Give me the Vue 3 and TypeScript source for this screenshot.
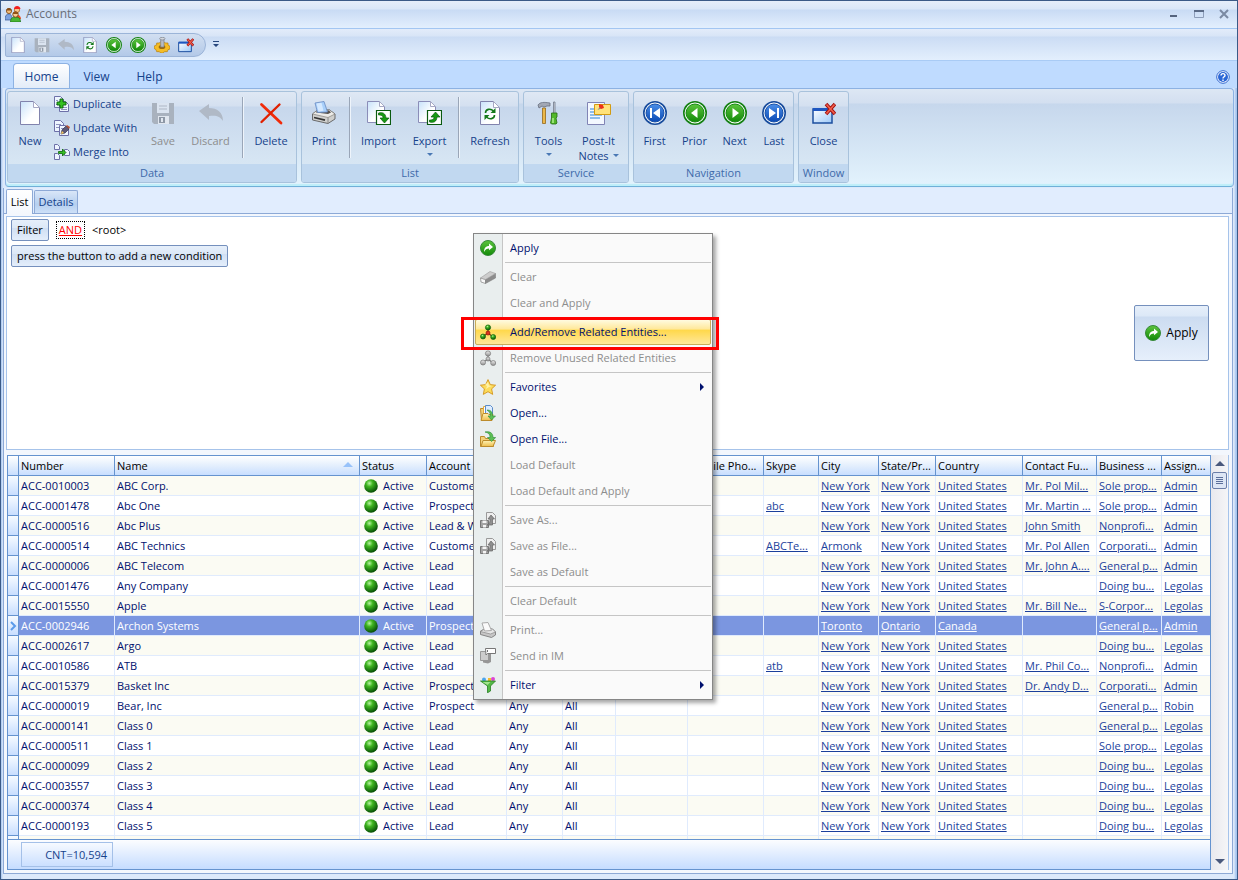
<script setup lang="ts">
import { ref } from 'vue'

interface RibbonButton { label: string; icon: string; width: number; disabled?: boolean; drop?: boolean; second?: string }
interface Stack { stack: { label: string; icon: string }[] }
interface Separator { sep: true }
type RibbonItem = RibbonButton | Stack | Separator
interface MenuEntry { label: string; icon?: string; disabled?: boolean; sub?: boolean; active?: boolean; line?: boolean }

const quick = [
  { name: 'New', icon: 'doc', off: false },
  { name: 'Save', icon: 'floppy', off: true },
  { name: 'Discard', icon: 'undo', off: true },
  { name: 'Refresh', icon: 'refresh', off: false },
  { name: 'Prior', icon: 'prior', off: false },
  { name: 'Next', icon: 'next', off: false },
  { name: 'Settings', icon: 'gear', off: false },
  { name: 'Close', icon: 'close', off: false }
]

const groups: { title: string; items: RibbonItem[] }[] = [
  { title: 'Data', items: [
    { label: 'New', icon: 'doc', width: 44 },
    { stack: [{ label: 'Duplicate', icon: 'duplicate' }, { label: 'Update With', icon: 'update' }, { label: 'Merge Into', icon: 'merge' }] },
    { label: 'Save', icon: 'floppy', width: 38, disabled: true },
    { label: 'Discard', icon: 'undo', width: 57, disabled: true },
    { sep: true },
    { label: 'Delete', icon: 'delete', width: 50 }
  ] },
  { title: 'List', items: [
    { label: 'Print', icon: 'printer', width: 44 },
    { sep: true },
    { label: 'Import', icon: 'import', width: 51 },
    { label: 'Export', icon: 'export', width: 51, drop: true },
    { sep: true },
    { label: 'Refresh', icon: 'refresh', width: 56 }
  ] },
  { title: 'Service', items: [
    { label: 'Tools', icon: 'tools', width: 49, drop: true },
    { label: 'Post-It', icon: 'note', width: 51, second: 'Notes' }
  ] },
  { title: 'Navigation', items: [
    { label: 'First', icon: 'first', width: 41 },
    { label: 'Prior', icon: 'prior', width: 39 },
    { label: 'Next', icon: 'next', width: 41 },
    { label: 'Last', icon: 'last', width: 38 }
  ] },
  { title: 'Window', items: [{ label: 'Close', icon: 'close', width: 49 }] }
]

const menu: MenuEntry[] = [
  { label: 'Apply', icon: 'apply' },
  { label: 'Clear', icon: 'eraser', disabled: true, line: true },
  { label: 'Clear and Apply', disabled: true },
  { label: 'Add/Remove Related Entities...', icon: 'nodes', active: true, line: true },
  { label: 'Remove Unused Related Entities', icon: 'nodes-off', disabled: true },
  { label: 'Favorites', icon: 'star', sub: true, line: true },
  { label: 'Open...', icon: 'open' },
  { label: 'Open File...', icon: 'openfile' },
  { label: 'Load Default', disabled: true },
  { label: 'Load Default and Apply', disabled: true },
  { label: 'Save As...', icon: 'saveas', disabled: true, line: true },
  { label: 'Save as File...', icon: 'saveas', disabled: true },
  { label: 'Save as Default', disabled: true },
  { label: 'Clear Default', disabled: true, line: true },
  { label: 'Print...', icon: 'printer-off', disabled: true, line: true },
  { label: 'Send in IM', icon: 'im', disabled: true },
  { label: 'Filter', icon: 'funnel', sub: true, line: true }
]

const columns = [
  { title: 'Number', width: 96 }, { title: 'Name', width: 0 }, { title: 'Status', width: 67 },
  { title: 'Account', width: 80 }, { title: '', width: 56 }, { title: '', width: 53 }, { title: '', width: 72 },
  { title: 'Mobile Pho...', width: 76 }, { title: 'Skype', width: 55 }, { title: 'City', width: 60 },
  { title: 'State/Pr...', width: 57 }, { title: 'Country', width: 87 }, { title: 'Contact Fu...', width: 74 },
  { title: 'Business ...', width: 65 }, { title: 'Assign...', width: 48 }
]

interface Account { num: string; name: string; type: string; links: string[]; scope: string[] }
const NY = ['New York', 'New York', 'United States']
const none = ['', '']
const all = ['Any', 'All']
const source: [string, string, string, string[], string[]][] = [
  ['ACC-0010003', 'ABC Corp.', 'Customer', ['', ...NY, 'Mr. Pol Mil...', 'Sole prop...', 'Admin'], none],
  ['ACC-0001478', 'Abc One', 'Prospect', ['abc', ...NY, 'Mr. Martin ...', 'Sole prop...', 'Admin'], none],
  ['ACC-0000516', 'Abc Plus', 'Lead & W', ['', ...NY, 'John Smith', 'Nonprofi...', 'Admin'], none],
  ['ACC-0000514', 'ABC Technics', 'Customer', ['ABCTe...', 'Armonk', 'New York', 'United States', 'Mr. Pol Allen', 'Corporati...', 'Admin'], none],
  ['ACC-0000006', 'ABC Telecom', 'Lead', ['', ...NY, 'Mr. John A....', 'General p...', 'Admin'], none],
  ['ACC-0001476', 'Any Company', 'Lead', ['', ...NY, '', 'Doing bu...', 'Legolas'], none],
  ['ACC-0015550', 'Apple', 'Lead', ['', ...NY, 'Mr. Bill Ne...', 'S-Corpor...', 'Legolas'], none],
  ['ACC-0002946', 'Archon Systems', 'Prospect', ['', 'Toronto', 'Ontario', 'Canada', '', 'General p...', 'Admin'], none],
  ['ACC-0002617', 'Argo', 'Lead', ['', ...NY, '', 'Doing bu...', 'Legolas'], none],
  ['ACC-0010586', 'ATB', 'Lead', ['atb', ...NY, 'Mr. Phil Co...', 'Nonprofi...', 'Admin'], none],
  ['ACC-0015379', 'Basket Inc', 'Prospect', ['', ...NY, 'Dr. Andy D...', 'Corporati...', 'Admin'], none],
  ['ACC-0000019', 'Bear, Inc', 'Prospect', ['', ...NY, '', 'General p...', 'Robin'], all],
  ['ACC-0000141', 'Class 0', 'Lead', ['', ...NY, '', 'General p...', 'Legolas'], all],
  ['ACC-0000511', 'Class 1', 'Lead', ['', ...NY, '', 'Sole prop...', 'Legolas'], all],
  ['ACC-0000099', 'Class 2', 'Lead', ['', ...NY, '', 'Doing bu...', 'Legolas'], all],
  ['ACC-0003557', 'Class 3', 'Lead', ['', ...NY, '', 'Doing bu...', 'Legolas'], all],
  ['ACC-0000374', 'Class 4', 'Lead', ['', ...NY, '', 'Doing bu...', 'Legolas'], all],
  ['ACC-0000193', 'Class 5', 'Lead', ['', ...NY, '', 'Doing bu...', 'Legolas'], all]
]
const rows: Account[] = source.map(([num, name, type, links, scope]) => ({ num, name, type, links, scope }))

const selected = ref(7)
const ribbonTab = ref('Home')
</script>

<template>
  <div class="window">
    <svg class="defs" aria-hidden="true">
      <defs>
        <linearGradient id="gPaper" x1="0" y1="0" x2="1" y2="1"><stop offset="0" stop-color="#c8e2fb" /><stop offset=".6" stop-color="#fff" /></linearGradient>
        <radialGradient id="gBall" cx=".38" cy=".3" r=".7"><stop offset="0" stop-color="#b9f5a0" /><stop offset=".35" stop-color="#3fb51f" /><stop offset="1" stop-color="#064f06" /></radialGradient>
        <linearGradient id="gGreen" x1="0" y1="0" x2="0" y2="1"><stop offset="0" stop-color="#5cc43e" /><stop offset="1" stop-color="#128a08" /></linearGradient>
        <linearGradient id="gBlue" x1="0" y1="0" x2="0" y2="1"><stop offset="0" stop-color="#4c8fe8" /><stop offset="1" stop-color="#0a49b4" /></linearGradient>
        <linearGradient id="gWin" x1="0" y1="0" x2="1" y2="1"><stop offset="0" stop-color="#fff" /><stop offset="1" stop-color="#9cc8f8" /></linearGradient>
        <linearGradient id="gFold" x1="0" y1="0" x2="0" y2="1"><stop offset="0" stop-color="#fff3b4" /><stop offset="1" stop-color="#edbd4c" /></linearGradient>
        <linearGradient id="gGrey" x1="0" y1="0" x2="0" y2="1"><stop offset="0" stop-color="#f0f0f0" /><stop offset="1" stop-color="#8f8f8f" /></linearGradient>
      </defs>
      <symbol id="doc" viewBox="0 0 24 24"><path d="M2.500 .5h13l6 6v17h-19z" fill="url(#gPaper)" stroke="#8183ad" /><path d="M15.500 .5v6h6z" fill="#fff" stroke="#a6a8c4" /></symbol>
      <symbol id="floppy" viewBox="0 0 24 24"><path d="M1 2h22v21H3l-2-2z" fill="#a9b2be" /><path d="M6 2h12v10H6z" fill="#dbe4f0" /><path d="M8 5h8M8 8h8" stroke="#aeb7c5" /><path d="M7 15h11v8H7z" fill="#e1e7ef" /><path d="M8 16h6v6H8z" fill="#8e98a6" /><path d="M10 17h2v4h-2z" fill="#e1e7ef" /></symbol>
      <symbol id="undo" viewBox="0 0 24 24"><path d="M0 10 10 3v4c8 0 14 4 14 13-3-5-7-6-14-5v4z" fill="#b0b9c6" /></symbol>
      <symbol id="refresh" viewBox="0 0 24 24"><use href="#doc" /><path d="M7.500 12c0-4 5-5 8-2M16.500 14c0 4-5 5-8 2" fill="none" stroke="#14791b" stroke-width="1.600" /><path d="M17.500 7v5h-5zM6.500 19v-5h5z" fill="#14791b" /></symbol>
      <symbol id="ringg" viewBox="0 0 24 24"><circle cx="12" cy="12" r="11.200" fill="#fff" stroke="#138012" stroke-width="1.600" /><circle cx="12" cy="12" r="9" fill="url(#gGreen)" stroke="#148a12" /></symbol>
      <symbol id="ringb" viewBox="0 0 24 24"><circle cx="12" cy="12" r="11.200" fill="#fff" stroke="#174b9c" stroke-width="1.600" /><circle cx="12" cy="12" r="9" fill="url(#gBlue)" stroke="#164fa8" /></symbol>
      <symbol id="prior" viewBox="0 0 24 24"><use href="#ringg" /><path d="M14.500 7v10L8 12z" fill="#fff" /></symbol>
      <symbol id="next" viewBox="0 0 24 24"><use href="#ringg" /><path d="M9.500 7v10l6.500-5z" fill="#fff" /></symbol>
      <symbol id="first" viewBox="0 0 24 24"><use href="#ringb" /><path d="M17 7v10l-7-5zM7 7h2v10H7z" fill="#fff" /></symbol>
      <symbol id="last" viewBox="0 0 24 24"><use href="#ringb" /><path d="M7 7v10l7-5zM15 7h2v10h-2z" fill="#fff" /></symbol>
      <symbol id="gear" viewBox="0 0 24 24"><path d="M1 13l3-1 0-3 4 0 2-2h5l2 2 4 0 0 3 3 2v4l-3 1-1 3-4 0-3 2h-3l-2-2-4 0-1-3-3-2z" fill="#f5bd25" stroke="#b27a0c" /><ellipse cx="12" cy="15" rx="5" ry="3" fill="#9a6a10" /><path d="M10 3h5v12h-5z" fill="#b8bcc4" stroke="#767b86" /><ellipse cx="12.500" cy="2.500" rx="4" ry="2" fill="#d5d8de" stroke="#767b86" /></symbol>
      <symbol id="close" viewBox="0 0 24 24"><path d="M1 8h19v14H1z" fill="url(#gWin)" stroke="#1c4f9f" stroke-width="1.500" /><path d="M1 7h19v3H1z" fill="#1e56c0" /><path d="M14 3l9 10M23 3l-9 10" stroke="#a31212" stroke-width="3.600" /><path d="M14.500 3.500l8 9M22.500 3.500l-8 9" stroke="#f2604c" stroke-width="1.600" /></symbol>
      <symbol id="delete" viewBox="0 0 24 24"><path d="M2.500 3.500 22 22" stroke="#f02b0a" stroke-width="2.800" stroke-linecap="round" /><path d="M20.500 3.500 2.500 21" stroke="#e02000" stroke-width="2.400" stroke-linecap="round" /></symbol>
      <symbol id="printer" viewBox="0 0 24 24"><path d="M.5 13l5-4h12l5.500 4v5l-7 4.500-15.500-3.500z" fill="#cfcfcd" stroke="#5d5d5d" stroke-width=".9" /><path d="M.5 13l5-4h12l5.500 4-7 3.500z" fill="#ecebe8" stroke="#77746f" stroke-width=".6" /><path d="M5 9.500h12l2 2-3 1.500-12-1.500z" fill="#55514d" /><path d="M3 2l9-1.500 3.500 10.500-10 .5z" fill="#a9d0fb" stroke="#6789c2" stroke-width=".8" /><path d="M4.500 2.500l5-.8 2 8-5 .8z" fill="#d5e9ff" /><path d="M2 16.500l11 2.700" stroke="#333" stroke-width="1.800" /><path d="M16 16.500v6" stroke="#8a8a8a" /></symbol>
      <symbol id="import" viewBox="0 0 24 24"><path d="M.5 .5h12l5 5v16h-17z" fill="url(#gPaper)" stroke="#8b8db8" /><path d="M12.500 .5v5h5z" fill="#fff" stroke="#a6a8c4" /><path d="M9.500 9.500h14v14h-14z" fill="#fff" stroke="#0a5a10" stroke-width="1.200" /><path d="M11.500 12c4-1 7 0 7.500 5h3l-4.500 5-4.500-5h3c0-2-1-3-4.500-3z" fill="#179a12" stroke="#0a5a10" stroke-width=".7" /></symbol>
      <symbol id="export" viewBox="0 0 24 24"><path d="M.5 .5h12l5 5v16h-17z" fill="url(#gPaper)" stroke="#8b8db8" /><path d="M12.500 .5v5h5z" fill="#fff" stroke="#a6a8c4" /><path d="M9.500 9.500h14v14h-14z" fill="#fff" stroke="#0a5a10" stroke-width="1.200" /><path d="M11.500 21c4 1 7 0 7.500-5h3L17.500 11l-4.500 5h3c0 2-1 3-4.500 3z" fill="#179a12" stroke="#0a5a10" stroke-width=".7" /></symbol>
      <symbol id="tools" viewBox="0 0 24 24"><path d="M1 4c2-3 6-3 12-2v3h-3L7 6 5 5 2 7z" fill="#a2a8b5" stroke="#666d7d" stroke-width=".8" /><path d="M5.500 7h3v15.500h-3z" fill="#ecb849" stroke="#94681a" stroke-width=".8" /><path d="M16.500 1h1.500v12h-1.500z" fill="#d2d6de" stroke="#70788a" stroke-width=".8" /><path d="M14.500 12h5.500v4l-1 1 1 5-1 1h-4.500l-1-1 1-5z" fill="#52b72b" stroke="#236d10" stroke-width=".8" /><path d="M16 17v5" stroke="#b0ef90" stroke-width="1.500" /></symbol>
      <symbol id="note" viewBox="0 0 24 24"><path d="M.5 1.500h17v22H.5z" fill="#f3f8ff" stroke="#8184b5" /><path d="M3 8h12M3 11h12M3 14h12M3 17h10" stroke="#2d83d4" /><path d="M7.500 3.500h16v10h-16z" fill="#ffe27a" stroke="#d29b12" /><path d="M10.500 9l3-4 2 2z" fill="#888" /><path d="M12 3l4 1 1 3-3 1-2-2z" fill="#ee3118" /></symbol>
      <symbol id="duplicate" viewBox="0 0 16 16"><path d="M.5 .5h6l3 3v8h-9z" fill="#eef5ff" stroke="#6d70a8" /><path d="M5.500 5.500h6l3 3v7h-9z" fill="#eef5ff" stroke="#6d70a8" /><path d="M7 11.500h6M7 13.500h6M2 4.500h2M2 8.500h2" stroke="#8f93be" /><path d="M6 3h3v3h3v3H9v3H6V9H3V6h3z" fill="#35c022" stroke="#0a6209" stroke-width=".9" /></symbol>
      <symbol id="update" viewBox="0 0 16 16"><path d="M.5 .5h6l3 3v8h-9z" fill="#eef5ff" stroke="#6d70a8" /><path d="M5.500 5.500h6l3 3v7h-9z" fill="#eef5ff" stroke="#6d70a8" /><path d="M2 4.500h5M2 7.500h3M7 8.500h3" stroke="#8f93be" /><path d="M7 14l1-4 4-4 3 3-4 4z" fill="#5d5a78" stroke="#35324f" stroke-width=".7" /><path d="M12 6l1-1 3 2-1 2z" fill="#b95437" /><path d="M7 14l1-3 2 2z" fill="#ffce5c" /></symbol>
      <symbol id="merge" viewBox="0 0 16 16"><path d="M.5 .5h3l2 2v3h-5zM.5 9.500h3l2 2v4h-5zM10.500 5.500h3l2 2v4h-5z" fill="#eef5ff" stroke="#6d70a8" /><path d="M4.500 7.500h4V5L12 8.500 8.500 12V9.500h-4z" fill="#35c022" stroke="#0a6209" stroke-width=".8" /></symbol>
      <symbol id="users" viewBox="0 0 16 16"><path d="M0 14c0-5 2-6 4-6s3 2 3 6z" fill="#7ba1df" stroke="#375892" stroke-width=".7" /><circle cx="4" cy="5" r="2.600" fill="#f2bd7b" stroke="#7a4311" stroke-width=".8" /><path d="M1.300 4.500c0-3.500 5-3.500 5.400 0z" fill="#8a4d14" /><path d="M9 9c4-1 7 0 7 4h-6z" fill="#eb4b24" /><circle cx="12" cy="4" r="2.600" fill="#f8c58b" stroke="#9a5410" stroke-width=".7" /><path d="M9 3c0-4 6-4 6.500 0z" fill="#f31f1f" /><path d="M5.500 16c0-4 2-5 5-5s5 1 5 5z" fill="#49b634" stroke="#186f12" stroke-width=".7" /><circle cx="10.500" cy="8.500" r="2.700" fill="#f9cb90" stroke="#764010" stroke-width=".9" /><path d="M7.800 8c0-3.500 5.500-3.500 5.500 0z" fill="#925316" /></symbol>
      <symbol id="apply" viewBox="0 0 16 16"><circle cx="8" cy="8" r="7.500" fill="url(#gGreen)" stroke="#37893a" /><path d="M4 12c0-4 2-6 5-6V3.500L13 7 9 10.200V8.500C7 8.500 5 9.500 4 12z" fill="#fff" /></symbol>
      <symbol id="eraser" viewBox="0 0 16 16"><path d="M.5 9l5 1.500v4l-4.500-1.500z" fill="#f7f7f7" stroke="#909090" stroke-width=".8" /><path d="M5.500 10.500l10-6v4.500l-10 5.500z" fill="#8c8c8c" stroke="#808080" stroke-width=".6" /><path d="M.5 9l9.500-6.500 5.500 2-10 6z" fill="#cdcdcd" stroke="#9a9a9a" stroke-width=".6" /></symbol>
      <symbol id="nodes" viewBox="0 0 16 16"><path d="M8 3v6L3 12.500M8 9l5 4" fill="none" stroke="#704510" stroke-width="1.200" /><circle cx="8" cy="3.500" r="2.600" fill="url(#gBall)" stroke="#1b6812" stroke-width=".7" /><circle cx="3" cy="12.500" r="2.500" fill="url(#gBall)" stroke="#1b6812" stroke-width=".7" /><circle cx="13.200" cy="13" r="2.500" fill="url(#gBall)" stroke="#1b6812" stroke-width=".7" /><circle cx="8" cy="9" r="2" fill="#dd321e" stroke="#8e1408" stroke-width=".7" /></symbol>
      <symbol id="nodes-off" viewBox="0 0 16 16"><path d="M8 3v6L3 12.500M8 9l5 4" fill="none" stroke="#777" stroke-width="1.200" /><g fill="url(#gGrey)" stroke="#808080" stroke-width=".8"><circle cx="8" cy="3.500" r="2.600" /><circle cx="3" cy="12.500" r="2.500" /><circle cx="13.200" cy="13" r="2.500" /><circle cx="8" cy="9" r="2" /></g></symbol>
      <symbol id="star" viewBox="0 0 16 16"><path d="M8 .6l2.300 5 5.300.6-4 3.700 1.100 5.500L8 12.700l-4.700 2.700 1.100-5.500-4-3.700 5.300-.6z" fill="#fcdc5c" stroke="#d3951d" stroke-width=".9" stroke-linejoin="round" /><path d="M8 3l1 3.500 3 .5-3 1-3 2 1-3-2-1z" fill="#fff2a7" /></symbol>
      <symbol id="open" viewBox="0 0 16 16"><path d="M.5 3.500h5v12h-4z" fill="#f3d27a" stroke="#bc8b2b" /><path d="M3.500 1.500h7l2 2v9h-9z" fill="#fff" stroke="#e3aa3c" /><path d="M5.500 .5h5l2 2v7h-7z" fill="#dcecff" stroke="#5b8cc8" /><path d="M1 15.500l2-7h5l1 1h4l-1 6z" fill="url(#gFold)" stroke="#bc8b2b" /><path d="M7 5c4 0 5.500 2 5.500 6h3L11.500 15 8 11h2.500c0-3-1-4-3.500-6z" fill="#5cbf55" stroke="#2a8a35" stroke-width=".6" /></symbol>
      <symbol id="openfile" viewBox="0 0 16 16"><path d="M.5 15.500v-10h4l1 2h8v8z" fill="#f3d27a" stroke="#bc8b2b" /><path d="M1 15.500l2-6h12.500l-2.500 6z" fill="url(#gFold)" stroke="#bc8b2b" /><path d="M5 1c5-1 8 1 8 5.500h2.700l-4 4-4.200-4H10c0-3-1-4.500-5-5.500z" fill="#5cbf55" stroke="#2a8a35" stroke-width=".6" /></symbol>
      <symbol id="saveas" viewBox="0 0 16 16"><path d="M6.500 .5h6l3 3v8h-9z" fill="#eee" stroke="#999" /><path d="M.5 8.500h8v7h-8z" fill="#a3a3a3" stroke="#777" /><path d="M2.500 8.500h4v2.500h-4zM3 13h3v2.500H3z" fill="#f4f4f4" /><path d="M11 3l3.500 4h-2v6H7c2-1 3-2 3-6H8z" fill="#8f8f8f" stroke="#666" stroke-width=".7" /></symbol>
      <symbol id="printer-off" viewBox="0 0 16 16"><path d="M.5 9l4-2h8l3 3v3l-4 2.500-11-3z" fill="#c6c6c6" stroke="#858585" /><path d="M.5 9.500l10 2.500 5-2-3-3h-8z" fill="#e6e6e6" stroke="#8a8a8a" stroke-width=".7" /><path d="M2 1l6-.5 3.500 8-7 .5z" fill="#fafafa" stroke="#aaa" /></symbol>
      <symbol id="im" viewBox="0 0 16 16"><path d="M.5 3.500h8v9h-8z" fill="#ccc" stroke="#999" /><path d="M9 5l2 1v8l-3 1.500-5-1V13l5-1z" fill="#969696" /><path d="M5.500 .5h10v5h-8l-1.500 1.500z" fill="#fff" stroke="#777" /><path d="M7.500 2v2" stroke="#777" /></symbol>
      <symbol id="funnel" viewBox="0 0 16 16"><circle cx="4" cy="2.500" r="2" fill="#4ba6ed" /><path d="M8 4V1h3v3z" fill="#f4bc2e" /><circle cx="13" cy="2" r="2" fill="#dc45d2" /><path d="M.5 4h15l-5 5v5l-3 1.800V9z" fill="#54b946" stroke="#267f22" stroke-width=".8" /><path d="M2.500 5h8L7.500 8z" fill="#a3e48e" /></symbol>
      <symbol id="ball" viewBox="0 0 14 14"><circle cx="7" cy="7" r="6.800" fill="url(#gBall)" /></symbol>
    </svg>

    <header class="title">
      <svg class="i16"><use href="#users" /></svg>
      <h1>Accounts</h1>
      <div class="sysbtns">
        <button aria-label="Minimize"><svg viewBox="0 0 10 10"><path d="M1 6h7v2H1z" fill="#56647e" /></svg></button>
        <button aria-label="Maximize"><svg viewBox="0 0 10 10"><path d="M.5 1.500h9v7h-9z" fill="none" stroke="#8d9db9" /><path d="M0 1h10v2H0z" fill="#5a6a86" /></svg></button>
        <button aria-label="Close window"><svg viewBox="0 0 10 10"><path d="M1 1l8 8M9 1 1 9" stroke="#7a89a2" stroke-width="2" /></svg></button>
      </div>
    </header>

    <div class="quick">
      <div class="pill">
        <button v-for="q in quick" :key="q.name" :aria-label="q.name" :disabled="q.off"><svg class="i16"><use :href="'#' + q.icon" /></svg></button>
      </div>
      <button class="more" aria-label="Customize toolbar"><svg viewBox="0 0 8 8"><path d="M1 0h6v1H1zM1 3h6L4 6z" fill="#27477e" /></svg></button>
    </div>

    <nav class="tabs">
      <button v-for="t in ['Home', 'View', 'Help']" :key="t" :class="{ on: t === ribbonTab }" @click="ribbonTab = t">{{ t }}</button>
      <button class="help" aria-label="Help topics"><svg viewBox="0 0 14 14"><circle cx="7" cy="7" r="6.300" fill="#fff" stroke="#2e65cf" /><circle cx="7" cy="7" r="5" fill="#2c67d6" /><path d="M5 5.500c0-2.500 4-2.500 4 0 0 1.300-2 1.300-2 3M7 9.500v1.500" fill="none" stroke="#fff" stroke-width="1.400" /></svg></button>
    </nav>

    <section class="ribbon">
      <div v-for="g in groups" :key="g.title" class="group">
        <div class="tools" :class="{ roomy: g.title === 'Service' }">
          <template v-for="(it, n) in g.items" :key="n">
            <span v-if="'sep' in it" class="vsep"></span>
            <div v-else-if="'stack' in it" class="stack">
              <button v-for="s in it.stack" :key="s.label"><svg class="i16"><use :href="'#' + s.icon" /></svg>{{ s.label }}</button>
            </div>
            <button v-else class="big" :style="{ width: it.width + 'px' }" :disabled="it.disabled">
              <svg class="i24"><use :href="'#' + it.icon" /></svg>
              <span>{{ it.label }}</span>
              <span v-if="it.second" class="second">{{ it.second }}<i class="drop"></i></span>
              <i v-if="it.drop" class="drop below"></i>
            </button>
          </template>
        </div>
        <div class="caption">{{ g.title }}</div>
      </div>
    </section>

    <main class="page">
      <div class="pagetabs">
        <button class="on">List</button><button>Details</button>
      </div>

      <section class="filter">
        <div class="conditions">
          <div class="root">
            <button class="soft">Filter</button>
            <a href="#" class="and">AND</a>
            <span>&lt;root&gt;</span>
          </div>
          <button class="soft">press the button to add a new condition</button>
        </div>
        <button class="applybtn"><svg class="i16"><use href="#apply" /></svg>Apply</button>
      </section>

      <section class="grid">
        <div class="gridmain">
          <div class="scroller">
            <table>
              <colgroup>
                <col class="selcol">
                <col v-for="(c, n) in columns" :key="n" :style="{ width: c.width ? c.width + 'px' : 'auto' }">
              </colgroup>
              <thead>
                <tr><th></th><th v-for="(c, n) in columns" :key="n">{{ c.title }}<i v-if="c.title === 'Name'" class="sort"></i></th></tr>
              </thead>
              <tbody>
                <tr v-for="(r, n) in rows" :key="r.num" :class="{ sel: n === selected }" @click="selected = n">
                  <td class="handle"><svg v-if="n === selected" viewBox="0 0 8 10"><path d="M1 1l4 4-4 4" fill="none" stroke="#5b9bea" stroke-width="2" /></svg></td>
                  <td>{{ r.num }}</td><td>{{ r.name }}</td>
                  <td><span class="status"><svg><use href="#ball" /></svg>Active</span></td>
                  <td>{{ r.type }}</td><td v-for="(s, k) in r.scope" :key="'s' + k">{{ s }}</td><td></td><td></td>
                  <td v-for="(l, k) in r.links" :key="k"><a v-if="l" href="#">{{ l }}</a></td>
                </tr>
                <tr><td class="handle"></td><td></td><td></td><td><span class="status"><svg><use href="#ball" /></svg></span></td><td v-for="k in 12" :key="k"></td></tr>
              </tbody>
            </table>
          </div>
          <footer><span>CNT=10,594</span></footer>
        </div>
        <div class="bar">
          <button aria-label="Scroll up"><i class="up"></i></button>
          <div class="thumb"></div>
          <button class="end" aria-label="Scroll down"><i class="down"></i></button>
        </div>
      </section>
    </main>

    <ul class="menu">
      <li v-for="m in menu" :key="m.label" :class="{ divided: m.line }">
        <button :class="{ active: m.active }" :disabled="m.disabled">
          <svg class="i16"><use v-if="m.icon" :href="'#' + m.icon" /></svg>
          <span>{{ m.label }}</span>
          <i v-if="m.sub" class="sub"></i>
        </button>
      </li>
    </ul>
    <div class="callout"></div>
  </div>
</template>

<style>
body { margin: 0; overflow: hidden; }
</style>

<style scoped>
* { box-sizing: border-box; }
.window {
  position: relative; display: flex; flex-direction: column; height: 100vh; border: 1px solid #3b5a87;
  background: linear-gradient(90deg, #a5c4ee, #dce9fb 2px, #dce9fb calc(100% - 3px), #a5c4ee calc(100% - 1px));
  font: 11px/16px "Open Sans", "Noto Sans", sans-serif; color: #00106e;
}
button { font: inherit; color: inherit; background: none; border: 0; padding: 0; margin: 0; white-space: nowrap; }
.defs { position: absolute; width: 0; height: 0; }
svg { display: block; flex: none; }
.i16 { width: 16px; height: 16px; }
.i24 { width: 24px; height: 24px; }

.title { flex: none; display: flex; align-items: center; gap: 5px; height: 28px; padding: 0 8px 2px 4px; border-bottom: 1px solid #a3c6f2; background: linear-gradient(#e6eefa 0, #dae7f8 8px, #c9dbf4 9px, #e3effd 100%); }
.title h1 { flex: 1; margin: 0; font-size: 12px; font-weight: 400; color: #696e78; }
.sysbtns { display: flex; gap: 15px; }
.sysbtns svg { width: 10px; height: 10px; }

.quick { flex: none; display: flex; align-items: center; gap: 6px; height: 32px; padding: 0 4px; border-bottom: 1px solid #a9cbf5; background: linear-gradient(#e3ecfa 0, #d8e5f7 7px, #cbdcf4 8px, #e3effd 100%); }
.pill { display: flex; align-items: center; gap: 8px; height: 24px; padding: 0 11px 0 4px; border: 1px solid #9bb4d8; border-radius: 2px 12px 12px 2px; background: linear-gradient(#d2dff1, #b3c9e8); }
.more svg { width: 8px; height: 8px; }

.tabs { flex: none; display: flex; align-items: flex-end; height: 27px; padding: 0 7px 0 12px; background: #bfdbff; color: #15428b; font-size: 12px; }
.tabs button { height: 25px; width: 53px; padding-top: 2px; border: 1px solid transparent; border-bottom: 0; border-radius: 4px 4px 0 0; }
.tabs button.on { width: 57px; border-color: #8db2e3; background: linear-gradient(#fff, #e3ecf8); }
.tabs .help { width: 14px; height: 22px; margin-left: auto; padding: 0; border: 0; }
.help svg { width: 14px; height: 14px; }

.ribbon { flex: none; display: flex; gap: 4px; height: 99px; margin: 0 3px 1px 4px; padding: 2px 1px 3px; border: 1px solid #8db2e3; border-bottom-color: #6fb0d8; border-radius: 4px; background: linear-gradient(#dde7f4 0, #d3dff0 14px, #c6d7ec 15px, #e3f3fd 100%); box-shadow: inset 0 -2px 1px #bdeef9; }
.group { display: flex; flex-direction: column; border: 1px solid #a8c2dc; border-radius: 3px; overflow: hidden; background: linear-gradient(#dfe8f4 0, #d4e0f0 14px, #c7d7ec 15px, #d8e7f4 75px); }
.tools { flex: 1; min-height: 0; display: flex; color: #15428b; }
.roomy { padding-right: 4px; }
.caption { flex: none; height: 18px; line-height: 18px; background: #c1d8f0; color: #3e6aaa; text-align: center; }
.big { display: flex; flex-direction: column; align-items: center; padding-top: 9px; line-height: 15px; }
.big svg { margin-bottom: 8px; }
.big:disabled { color: #8d8d8d; }
.drop { border: 3px solid transparent; border-top-color: #4a78b4; border-bottom: 0; }
.below { margin-top: 5px; }
.second { display: flex; align-items: center; gap: 4px; }
.vsep { width: 1px; height: 61px; margin: 5px 3px; background: #9aa6b8; box-shadow: 1px 0 #eef4fb; }
.stack { display: flex; flex-direction: column; gap: 8px; width: 92px; padding: 4px 0 0 2px; }
.stack button { display: flex; align-items: center; gap: 3px; height: 16px; }

.page { flex: 1; min-height: 0; display: flex; flex-direction: column; margin: 0 4px 5px 2px; padding: 0 3px 3px 2px; border: 1px solid #8da9d6; border-top: 0; background: #f3f7fd; }
.pagetabs { flex: none; display: flex; align-items: flex-end; gap: 1px; height: 26px; margin: 0 -3px 2px -2px; padding-left: 2px; border-bottom: 1px solid #8da9d6; background: #e1edfe; }
.pagetabs button { height: 23px; width: 44px; border: 1px solid #8da9d6; border-bottom: 0; border-radius: 2px 2px 0 0; background: linear-gradient(#d9e6f8, #b5cfef 60%, #cde0f8); color: #15428b; }
.pagetabs .on { width: 27px; height: 25px; margin-bottom: -1px; background: linear-gradient(#fff, #f3f7fd); color: #000; }

.filter { flex: none; display: flex; justify-content: space-between; align-items: center; min-height: 234px; margin-bottom: 5px; padding-right: 19px; border: 1px solid #a6c3ea; background: #fff; color: #000; }
.conditions { align-self: flex-start; padding: 2px 4px; }
.root { display: flex; align-items: center; gap: 7px; margin-bottom: 4px; }
.soft { height: 22px; padding: 0 5px; border: 1px solid #7590bd; border-radius: 2px; background: linear-gradient(#e6effa 0, #dce8f7 40%, #d0dff3 41%, #e4eefb); }
.and { padding: 0 2px; border: 1px dotted #000; color: #f00; }
.applybtn { display: flex; align-items: center; justify-content: center; gap: 5px; width: 75px; height: 56px; border: 1px solid #7590bd; border-radius: 2px; background: linear-gradient(#e6effa 0, #dce8f7 10px, #ccdcf1 11px, #e6effb); font-size: 12px; }

.grid { flex: 1; min-height: 0; display: flex; margin-left: 1px; border-right: 1px solid #a6c3ea; }
.gridmain { flex: 1; min-width: 0; display: flex; flex-direction: column; border: 1px solid #6593cf; }
.scroller { flex: 1; min-height: 0; overflow: hidden; background: #fff; }
table { width: 100%; table-layout: fixed; border-collapse: separate; border-spacing: 0; }
.selcol { width: 11px; }
th, td { height: 20px; padding: 0 0 0 2px; overflow: hidden; white-space: nowrap; line-height: 19px; text-align: left; font-weight: 400; border-right: 1px solid #e0ebfd; border-bottom: 1px solid #e0ebfd; }
th { position: relative; color: #000; border-color: #6593cf; background: linear-gradient(#fff, #e4effd 50%, #c8deff); }
th:last-child, td:last-child { border-right: 0; }
.sort { position: absolute; right: 6px; top: 6px; border: 5px solid transparent; border-bottom-color: #97c2fa; border-top: 0; }
tbody tr:nth-child(odd) { background: #fbfbf3; }
tbody tr.sel { background: #7b96e0; color: #fff; }
td.handle { border-color: #6593cf; background: linear-gradient(#f6faff, #c8deff); }
.handle svg { width: 8px; height: 10px; }
td a { color: #1b3f9c; }
.sel td a { color: #fff; }
.status { display: flex; align-items: center; gap: 5px; height: 19px; padding-left: 2px; }
.status svg { width: 14px; height: 14px; }
footer { flex: none; height: 30px; padding: 2px 13px; border-top: 1px solid #6593cf; background: linear-gradient(#fcfdff, #c5dcff); }
footer span { display: block; width: 92px; height: 25px; padding-right: 5px; border: 1px solid #a4c0e8; line-height: 23px; text-align: right; color: #15428b; }
.bar { width: 17px; display: flex; flex-direction: column; align-items: center; background: linear-gradient(90deg, #e9e9ee, #f5f5f7); }
.bar button { height: 17px; width: 16px; display: flex; align-items: center; justify-content: center; }
.bar .end { margin-top: auto; }
.up, .down { border: 5px solid transparent; border-bottom-color: #49587c; border-top: 0; }
.down { transform: rotate(180deg); }
.thumb { width: 15px; height: 17px; border: 1px solid #6b7ea8; border-radius: 2px; background: repeating-linear-gradient(#5b6f9b 0 1px, transparent 1px 2px) 3px 4px / 7px 7px no-repeat, #dde6f5; }

.menu { position: absolute; left: 472px; top: 232px; width: 240px; margin: 0; padding: 1px; list-style: none; border: 1px solid #868686; background: linear-gradient(90deg, #e9eeee 28px, #c5c5c5 28px 29px, #fafafa 29px); box-shadow: 3px 3px 4px rgba(0, 0, 0, .35); }
.menu li { display: flex; }
.menu .divided { padding-top: 3px; background: linear-gradient(#c5c5c5, #c5c5c5) 30px 1px / calc(100% - 30px) 1px no-repeat; }
.menu button { display: flex; align-items: center; width: 100%; height: 26px; padding: 0 7px 0 5px; gap: 14px; text-align: left; }
.menu button:disabled { color: #8d8d8d; }
.menu span { flex: 1; }
.menu .active { border: 1px solid #c9ac58; border-radius: 2px; padding: 0 5px 0 4px; background: linear-gradient(#fffbe0 0, #ffe89a 38%, #ffd84a 42%, #ffe79a 100%); }
.sub { border: 4px solid transparent; border-left-color: #00106e; border-right: 0; }
.callout { position: absolute; left: 460px; top: 316px; width: 258px; height: 33px; border: 3px solid #f00; pointer-events: none; }
</style>
